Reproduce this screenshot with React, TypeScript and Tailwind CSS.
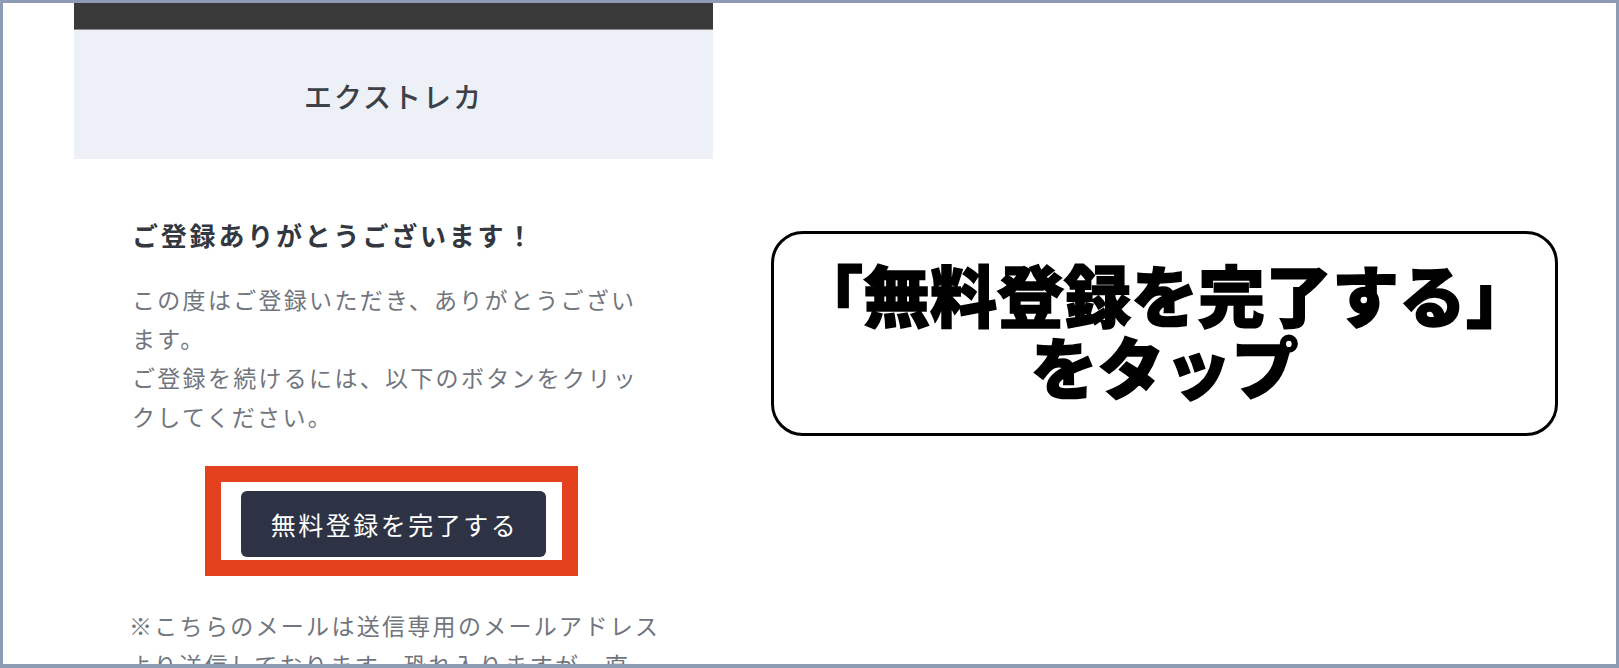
import React from "react";

const jp = { fontFamily: '"Noto Sans CJK JP", "Noto Sans", sans-serif' };

export default function App() {
  return (
    <div
      className="w-[1619px] h-[668px] overflow-hidden bg-white border-t-[3px] border-l-[3px] border-r-[3px] border-b-[4px] border-[#8d9cb3] flex"
      style={jp}
    >
      {/* email panel */}
      <div className="ml-[71px] w-[639px] flex flex-col shrink-0">
        <div className="h-[27px] bg-[#3a3a3a] border-b border-[#8a8a8a] shrink-0" />
        <div className="h-[129px] bg-[#edf1f7] flex items-center justify-center pt-[3px] shrink-0">
          <span className="text-[28px] font-medium tracking-[2px] text-[#3c4048] leading-none">
            エクストレカ
          </span>
        </div>
        <div className="px-[58px] pt-[56px] flex flex-col">
          <h1 className="text-[26px] leading-[39px] font-bold tracking-[2.8px] text-[#33373f] whitespace-nowrap">
            ご登録ありがとうございます！
          </h1>
          <p className="mt-[26px] text-[23px] leading-[39px] tracking-[2.3px] text-[#71757d] whitespace-nowrap">
            この度はご登録いただき、ありがとうござい
            <br />
            ます。
            <br />
            ご登録を続けるには、以下のボタンをクリッ
            <br />
            クしてください。
          </p>
          <div className="mt-[55px] flex justify-center">
            <div className="relative">
              <div className="w-[305px] h-[66px] rounded-[6px] bg-[#2d3244] flex items-center justify-center">
                <span className="text-white text-[25px] tracking-[2.5px] leading-none pl-[2px]">
                  無料登録を完了する
                </span>
              </div>
              <div className="absolute left-[-36px] top-[-25px] right-[-32px] bottom-[-19px] border-[16px] border-[#e4411f] pointer-events-none" />
            </div>
          </div>
          <p className="mt-[49px] text-[23px] leading-[39px] tracking-[2.3px] text-[#71757d] whitespace-nowrap -ml-[3px]">
            ※こちらのメールは送信専用のメールアドレス
            <br />
            より送信しております。恐れ入りますが、直
          </p>
        </div>
      </div>

      {/* callout */}
      <div className="flex-1 flex items-center justify-center">
        <div className="w-[787px] h-[205px] border-[3px] border-black rounded-[32px] flex flex-col items-center justify-center pb-[10px]">
          <div className="text-[67px] leading-[72px] font-black text-black tracking-[0px] whitespace-nowrap [-webkit-text-stroke:1.5px_black]">
            「無料登録を完了する」
          </div>
          <div className="text-[67px] leading-[72px] font-black text-black whitespace-nowrap [-webkit-text-stroke:1.5px_black]">
            をタップ
          </div>
        </div>
      </div>
    </div>
  );
}
